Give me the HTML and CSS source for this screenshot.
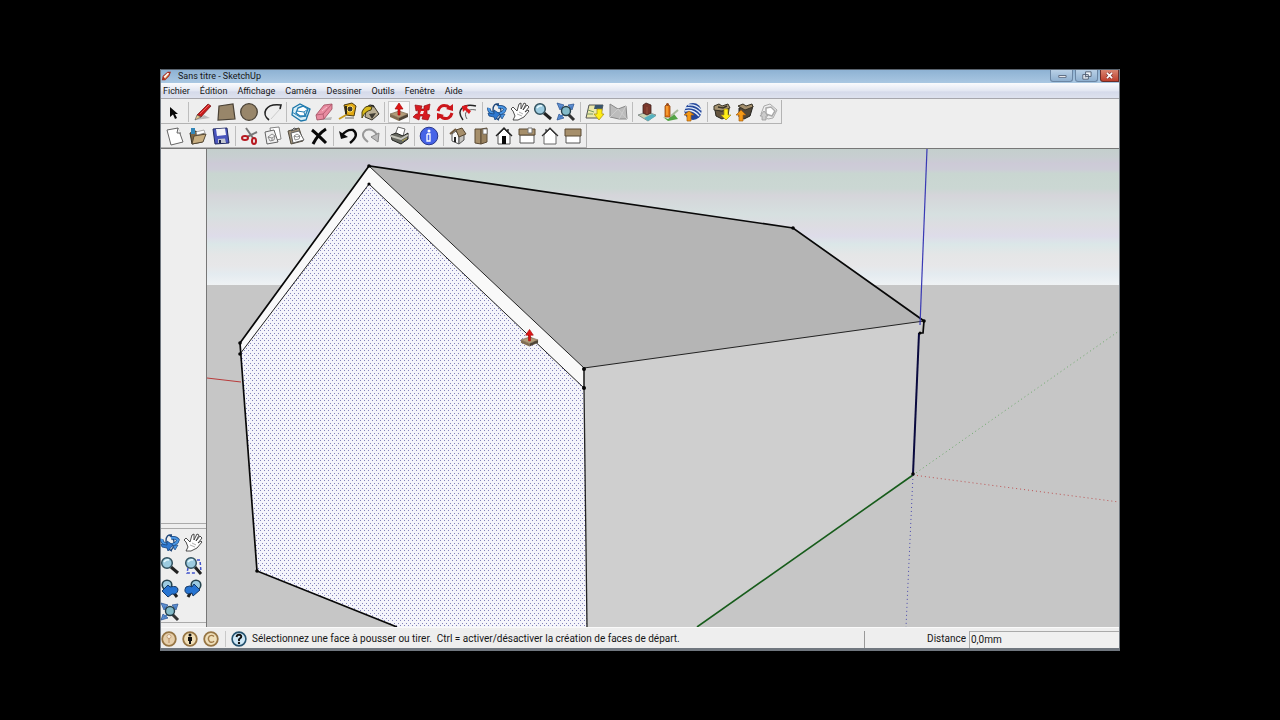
FILE: index.html
```html
<!DOCTYPE html>
<html lang="fr">
<head>
<meta charset="utf-8">
<title>Sans titre - SketchUp</title>
<link rel="stylesheet" href="styles.css">
</head>
<body>
<svg class="defs" width="0" height="0" aria-hidden="true">
  <symbol id="i-select" viewBox="0 0 20 20"><path d="M6 5V15L9 12.500L11 17L13 16L11 12H14Z" fill="#080808"/></symbol>
  <symbol id="i-pencil" viewBox="0 0 20 20"><path d="M3 18L17 16L11 13Z" fill="#bbb"/><path d="M4 13L15 2L18 4L8 15Z" fill="#c81c1c" stroke="#701010" stroke-width=".7"/><path d="M4 13L8 15L2 18Z" fill="#e8c890" stroke="#444" stroke-width=".6"/><path d="M7 12L16 3" stroke="#f06060"/></symbol>
  <symbol id="i-rect" viewBox="0 0 20 20"><path d="M3 4L17 2L19 17L2 18Z" fill="#98866a" stroke="#4a4236" stroke-width="1.200"/></symbol>
  <symbol id="i-circle" viewBox="0 0 20 20"><circle cx="10" cy="10" r="8.300" fill="#98866a" stroke="#4a4236" stroke-width="1.300"/></symbol>
  <symbol id="i-arc" viewBox="0 0 20 20"><path d="M7 18C-1 12 3 1 19 3L18 7" fill="none" stroke="#222" stroke-width="1.600"/><path d="M9 17L18 7" stroke="#ccc"/></symbol>
  <symbol id="i-component" viewBox="0 0 20 20"><path d="M2 6L9 2L19 7L15 18L10 19L1 13Z" fill="#d9eef6" stroke="#1b75a8" stroke-width="1.300"/><path d="M7 6L12 4L17 7L14 14L9 14L5 11Z" fill="#fff" stroke="#2680b4" stroke-width="1.400"/><path d="M6 9L13 10L17 7M13 10L14 14M1 10L9 15L16 14" fill="none" stroke="#2680b4"/></symbol>
  <symbol id="i-eraser" viewBox="0 0 20 20"><path d="M3 17L18 15L17 18H6Z" fill="#bbb"/><path d="M2 13L10 3L18 2V7L10 17L3 18Z" fill="#e88ba0" stroke="#9c4a5c" stroke-width=".8"/><path d="M2 13L9 12L18 2M9 12L10 17" fill="none" stroke="#ad566a" stroke-width=".8"/><path d="M8 9L13 5" stroke="#f9c0cc"/></symbol>
  <symbol id="i-tape" viewBox="0 0 20 20"><path d="M7 3L15 1L19 4L17 14L9 13Z" fill="#e2a914" stroke="#4b3b10"/><circle cx="13" cy="7" r="3" fill="#443c30" stroke="#fae06a"/><path d="M9 13L2 17" stroke="#c79a1c" stroke-width="2"/><path d="M8 16H17" stroke="#aaa" stroke-width="2"/><path d="M9 4V12" stroke="#332a18" stroke-width="2"/></symbol>
  <symbol id="i-paint" viewBox="0 0 20 20"><path d="M6 8L13 3L19 12L12 18L5 15Z" fill="#b9ae94" stroke="#38342a"/><path d="M6 8Q9 0 14 5" fill="none" stroke="#222" stroke-width="1.300"/><path d="M12 5Q5 2 2 10L2 16Q5 9 11 8Z" fill="#d8b81a" stroke="#4c4010"/><path d="M9 12L16 11L12 17Z" fill="#3f3b32"/></symbol>
  <symbol id="i-push" viewBox="0 0 20 20"><path d="M1 12L10 9L19 12L10 16Z" fill="#b19b78" stroke="#6b5b42" stroke-width=".6"/><path d="M1 12L10 16V19L1 15Z" fill="#806c50"/><path d="M10 16L19 12V15L10 19Z" fill="#4e4436"/><path d="M10 1L14 7H11V13H9V7H6Z" fill="#e01515" stroke="#a80b0b" stroke-width=".7"/></symbol>
  <symbol id="i-move" viewBox="0 0 20 20"><path d="M3 3L10 4L9 7L12 7L12 4L18 2L17 8L15 8L15 12L18 13L16 18L10 17L11 14H8L7 18L1 15L4 12L6 12L6 8L4 9Z" fill="#d81b20" stroke="#951015" stroke-width=".7"/><path d="M9 9H12L11 12H8Z" fill="#f2eaea"/></symbol>
  <symbol id="i-rotate" viewBox="0 0 20 20"><path d="M3 9Q5 2 12 4L15 6" fill="none" stroke="#cc171c" stroke-width="3"/><path d="M17 11Q15 18 8 16L5 14" fill="none" stroke="#cc171c" stroke-width="3"/><path d="M18 2V9L11 7ZM2 18V11L9 13Z" fill="#cc171c"/></symbol>
  <symbol id="i-offset" viewBox="0 0 20 20"><path d="M5 18C-2 9 4 1 18 4" fill="none" stroke="#252525" stroke-width="1.500"/><path d="M9 17C5 11 9 6 18 8" fill="none" stroke="#666"/><path d="M4 4L10 3L9 6L13 9L11 12L7 8L5 10Z" fill="#dc181d"/></symbol>
  <symbol id="i-orbit" viewBox="0 0 20 20"><path d="M12 2Q6 1 6 8Q6 16 12 18M9 2Q14 4 14 10Q14 15 11 17" fill="none" stroke="#20477a" stroke-width="1.400"/><path d="M2 6Q1 10 8 12Q17 12 18 7Q16 4 11 5" fill="none" stroke="#164682" stroke-width="3.400"/><path d="M2 6Q1 10 8 12Q17 12 18 7Q16 4 11 5" fill="none" stroke="#4b97e4" stroke-width="2"/><path d="M7 8L13 12L8 18L7 15L2 14L1 11L7 12Z" fill="#2f78d0" stroke="#164682" stroke-width=".8"/><path d="M13 13L18 12L15 17Z" fill="#4b97e4" stroke="#164682" stroke-width=".7"/></symbol>
  <symbol id="i-hand" viewBox="0 0 20 20"><path d="M3 18L5 14L3 9L1 7L3 5L7 9L9 2L11 1L11 7L14 1L16 2L13 8L17 3L19 5L15 10L18 8L19 9L14 15L8 18Z" fill="#fff" stroke="#3b3b3b" stroke-width=".9"/><path d="M7 12L12 14M9 10L13 12" stroke="#999" stroke-width=".8"/></symbol>
  <symbol id="i-zoom" viewBox="0 0 20 20"><path d="M11 11L18 17" stroke="#222" stroke-width="3"/><circle cx="7" cy="7" r="5.300" fill="#9ccbe0" stroke="#33525f" stroke-width="1.500"/><path d="M4 6Q6 3 9 4" fill="none" stroke="#e8faff" stroke-width="1.500"/></symbol>
  <symbol id="i-extents" viewBox="0 0 20 20"><path d="M1 1L8 3L4 8ZM18 2L12 3L16 8ZM1 18L3 12L8 16Z" fill="#5b8ed2" stroke="#264f8c" stroke-width=".7"/><path d="M4 5L7 7M16 5L13 7M4 15L7 13" stroke="#477bc0" stroke-width="2"/><path d="M12 12L18 18" stroke="#333" stroke-width="3"/><circle cx="10" cy="9" r="4.500" fill="#83bbc9" stroke="#263e48" stroke-width="1.400"/></symbol>
  <symbol id="i-zoomwin" viewBox="0 0 20 20"><path d="M14 4H17L18 16M5 12L4 17H12" fill="none" stroke="#4052cb" stroke-width="1.500" stroke-dasharray="3 2"/><path d="M12 11L18 18" stroke="#222" stroke-width="3"/><circle cx="8" cy="7" r="5.300" fill="#9ccbe0" stroke="#33525f" stroke-width="1.500"/><path d="M5 6Q7 3 10 4" fill="none" stroke="#e8faff" stroke-width="1.500"/></symbol>
  <symbol id="i-previous" viewBox="0 0 20 20"><path d="M11 10L17 18" stroke="#222" stroke-width="3"/><circle cx="7" cy="6" r="4.800" fill="#9ccbe0" stroke="#26444f" stroke-width="1.600"/><path d="M2 12L8 6L10 8Q18 6 18 11Q17 16 12 15L8 18Z" fill="#2674d2" stroke="#143968"/></symbol>
  <symbol id="i-next" viewBox="0 0 20 20"><path d="M9 11L5 18" stroke="#222" stroke-width="3"/><circle cx="13" cy="6" r="4.800" fill="#9ccbe0" stroke="#26444f" stroke-width="1.600"/><path d="M17 11L10 17L9 14L5 15Q0 13 3 8Q7 6 9 8L11 5Z" fill="#2674d2" stroke="#143968"/></symbol>
  <symbol id="i-getview" viewBox="0 0 20 20"><path d="M4 3H18L15 16H1Z" fill="#ece8aa" stroke="#555"/><path d="M10 3H18L17 7H9Z" fill="#38556e"/><path d="M3 8L9 10M2 12H8" stroke="#789a60"/><path d="M12 7H17V12H19L14 18L9 12H12Z" fill="#ffed15" stroke="#a58b12" stroke-width=".7"/></symbol>
  <symbol id="i-terrain" viewBox="0 0 20 20"><path d="M2 2L10 7L18 4L19 17L11 17L2 15Z" fill="#bcbcbc" stroke="#888"/><path d="M2 15L10 7L19 17M18 4L11 17" fill="none" stroke="#ccc"/></symbol>
  <symbol id="i-building" viewBox="0 0 20 20"><path d="M1 13L10 10L19 13L11 19Z" fill="#c9d1b0" stroke="#637071" stroke-width=".7"/><path d="M7 16L15 12L19 14L11 19Z" fill="#55b2c0"/><path d="M6 3L9 1L14 3V11L10 13L6 11Z" fill="#79372b" stroke="#3c211d" stroke-width=".8"/><path d="M10 5V12" stroke="#97523f"/></symbol>
  <symbol id="i-model" viewBox="0 0 20 20"><path d="M3 15L8 17L14 12L18 17L8 19Z" fill="#51a343"/><path d="M11 14L18 8" stroke="#a7b99b" stroke-width="2"/><path d="M5 4L7 2L10 4V15H5Z" fill="#e87814" stroke="#8d480f" stroke-width=".8"/><path d="M7 4V13" stroke="#ffbe4f"/><circle cx="7.500" cy="2.500" r="1.500" fill="#984c1e"/></symbol>
  <symbol id="i-earth" viewBox="0 0 20 20"><circle cx="10" cy="9.500" r="8.500" fill="#24479c"/><path d="M2 6Q12 4 18 12M5 3Q13 2 18 8M2 9Q10 7 16 14" fill="none" stroke="#e3edf9" stroke-width="1.400"/><path d="M6 9L11 13H8V19H4V13H1Z" fill="#f49a17" stroke="#a45c10" stroke-width=".7"/></symbol>
  <symbol id="i-get3d" viewBox="0 0 20 20"><path d="M3 8L10 9L17 7L16 14L10 17L4 14Z" fill="#66563f" stroke="#292720"/><path d="M2 4L7 2L10 4L16 2L18 6L10 9L2 8Z" fill="#a59270" stroke="#393427"/><path d="M6 5L11 6L15 4" fill="none" stroke="#393427" stroke-width="1.500"/><path d="M12 7H16V13H19L14 18L9 13H12Z" fill="#ffed15" stroke="#a58b12" stroke-width=".7"/></symbol>
  <symbol id="i-share3d" viewBox="0 0 20 20"><path d="M4 6L18 4L15 14L9 17L4 15Z" fill="#51483a" stroke="#24231f"/><path d="M3 4L8 2L11 4L17 2L18 5L10 8Z" fill="#a28d6b" stroke="#393427"/><path d="M6 8L11 13H8V19H4V13H1Z" fill="#f49a17" stroke="#a45c10" stroke-width=".7"/></symbol>
  <symbol id="i-sharecomp" viewBox="0 0 20 20"><path d="M6 4L12 2L19 8L15 16L10 17L3 12Z" fill="#eee" stroke="#aaa"/><path d="M8 6L13 5L17 9L14 14L8 12Z" fill="#fff" stroke="#aaa" stroke-width="1.500"/><path d="M6 9L10 14H8V18H4V14H2Z" fill="#ccc" stroke="#999" stroke-width=".8"/></symbol>
  <symbol id="i-new" viewBox="0 0 20 20"><path d="M2 4L13 2L18 16L6 19Z" fill="#fff" stroke="#666"/><path d="M13 2L12 7L16 7" fill="#eee" stroke="#666"/></symbol>
  <symbol id="i-open" viewBox="0 0 20 20"><path d="M2 7L8 5L9 7H16L14 16L4 18Z" fill="#7d6746" stroke="#383022"/><path d="M6 10L18 8L15 16L4 18Z" fill="#c8ae80" stroke="#544733"/><path d="M3 2H7V8H3Z" fill="#3286b8"/><path d="M8 6L16 4L17 7L9 9Z" fill="#fff" stroke="#777" stroke-width=".6"/></symbol>
  <symbol id="i-save" viewBox="0 0 20 20"><path d="M2 3L16 2L18 17L4 18Z" fill="#4a55bd" stroke="#20295f"/><path d="M5 3L14 2.500L15 9L6 10Z" fill="#f3f3f8"/><path d="M7 13L14 12.500L15 17H7Z" fill="#c2c6ce"/><path d="M8 14H10V17H8Z" fill="#1d254f"/></symbol>
  <symbol id="i-cut" viewBox="0 0 20 20"><path d="M6 2L13 12M17 6L7 11" stroke="#777" stroke-width="2"/><ellipse cx="5" cy="12" rx="3" ry="2" fill="none" stroke="#b71920" stroke-width="2"/><ellipse cx="14" cy="15" rx="2" ry="3" fill="none" stroke="#b71920" stroke-width="2"/></symbol>
  <symbol id="i-copy" viewBox="0 0 20 20"><path d="M7 2L16 1L18 13L9 15Z" fill="#fff" stroke="#777" stroke-width=".9"/><path d="M2 6L11 4L15 16L4 18Z" fill="#f1f1f1" stroke="#555" stroke-width=".9"/><path d="M5 11L9 8L12 10L11 14L7 15ZM5 11L9 12L12 10M9 12V15" fill="none" stroke="#777" stroke-width=".8"/></symbol>
  <symbol id="i-paste" viewBox="0 0 20 20"><path d="M2 5L13 2L17 15L5 18Z" fill="#a0917a" stroke="#514a3d"/><path d="M5 5L8 2L11 3Z" fill="#ccc" stroke="#555"/><path d="M5 7L13 5L18 14L7 17Z" fill="#fff" stroke="#555" stroke-width=".9"/><path d="M8 10L11 8L14 10L13 13L9 14ZM8 10L11 11L14 10" fill="none" stroke="#777" stroke-width=".8"/></symbol>
  <symbol id="i-delete" viewBox="0 0 20 20"><path d="M3 4Q8 8 17 17M17 3Q9 8 4 18" fill="none" stroke="#080808" stroke-width="3"/></symbol>
  <symbol id="i-undo" viewBox="0 0 20 20"><path d="M4 9Q9 3 15 4Q22 9 12 17" fill="none" stroke="#090909" stroke-width="2.400"/><path d="M1 5L3 13L10 11Z" fill="#090909"/></symbol>
  <symbol id="i-redo" viewBox="0 0 20 20"><path d="M16 9Q12 2 5 4Q-2 9 7 16" fill="none" stroke="#999" stroke-width="2"/><path d="M10 11L18 7L17 16Z" fill="#bbb" stroke="#888"/></symbol>
  <symbol id="i-print" viewBox="0 0 20 20"><path d="M5 9L8 1L15 3L13 10Z" fill="#fff" stroke="#666"/><path d="M1 9L6 7L13 10L18 7V13L11 18L2 14Z" fill="#666860" stroke="#262724"/><path d="M1 10L11 13L18 9" fill="none" stroke="#c5c5bb" stroke-width="2"/><path d="M12 15L17 12" stroke="#b1a654"/></symbol>
  <symbol id="i-info" viewBox="0 0 20 20"><circle cx="10" cy="10" r="8.800" fill="#4663e7" stroke="#28368a"/><circle cx="10" cy="5" r="1.500" fill="#fff"/><path d="M8 8H11V15H8V8" fill="none" stroke="#fff" stroke-width="1.300"/></symbol>
  <symbol id="i-iso" viewBox="0 0 20 20"><path d="M4 8L8 5L11 10V18L4 15Z" fill="#f9f9f9" stroke="#555"/><path d="M11 10L16 8V14L11 18Z" fill="#c5c4c0" stroke="#555"/><path d="M8 4L14 2L18 8L11 11Z" fill="#a68f6b" stroke="#55452f"/><path d="M8 3L2 8" stroke="#6d573d" stroke-width="2"/><path d="M6 11H8V16H6Z" fill="#222"/></symbol>
  <symbol id="i-top" viewBox="0 0 20 20"><path d="M4 3H10V18L4 17Z" fill="#a68f6b" stroke="#5b4a34"/><path d="M10 3L16 2V16L10 18Z" fill="#98815e" stroke="#5b4a34"/><path d="M12 3H16V8H12Z" fill="#fff" stroke="#666" stroke-width=".7"/></symbol>
  <symbol id="i-front" viewBox="0 0 20 20"><path d="M4 9L10 3L16 9V18H4Z" fill="#fff" stroke="#555"/><path d="M2 10L10 2L18 10M14 3V6" fill="none" stroke="#222" stroke-width="1.400"/><path d="M8 10H12V18H8Z" fill="#080808"/></symbol>
  <symbol id="i-side" viewBox="0 0 20 20"><path d="M3 9H17V17H3Z" fill="#fff" stroke="#555"/><path d="M2 3H18V9H2Z" fill="#a68f6b" stroke="#5b4a34"/><path d="M11 2H15V7H11Z" fill="#fff" stroke="#777"/></symbol>
  <symbol id="i-back" viewBox="0 0 20 20"><path d="M4 9L10 3L16 9V18H4Z" fill="#fff" stroke="#666"/><path d="M2 10L10 2L18 10M6 3V6" fill="none" stroke="#333" stroke-width="1.200"/></symbol>
  <symbol id="i-left" viewBox="0 0 20 20"><path d="M3 9H17V17H3Z" fill="#fff" stroke="#555"/><path d="M2 3H18V10H2Z" fill="#a68f6b" stroke="#5b4a34"/></symbol>
  <symbol id="i-geo" viewBox="0 0 16 16"><circle cx="8" cy="8" r="6.800" fill="#e6cfab" stroke="#967544" stroke-width="1.800"/><circle cx="8" cy="5.500" r="2" fill="#f8eddd" stroke="#b88f65" stroke-width=".7"/><path d="M8 7V12" stroke="#b98e64"/></symbol>
  <symbol id="i-person" viewBox="0 0 16 16"><circle cx="8" cy="8" r="6.800" fill="#f0dfb8" stroke="#967544" stroke-width="1.800"/><circle cx="8" cy="4" r="1.500" fill="#111"/><path d="M6 6H10V10H9V13H7V10H6Z" fill="#111"/></symbol>
  <symbol id="i-credit" viewBox="0 0 16 16"><circle cx="8" cy="8" r="6.800" fill="#efdfba" stroke="#967544" stroke-width="1.800"/><path d="M11 5.500Q9 3.500 6.500 5Q4 8 7 11Q10 12 11 10" fill="none" stroke="#a27d4a" stroke-width="1.400"/></symbol>
  <symbol id="i-help" viewBox="0 0 16 16"><circle cx="8" cy="8" r="6.900" fill="#cfe8f7" stroke="#24526f" stroke-width="1.600"/><path d="M5.500 6Q6 3.500 8.300 3.800Q11 4.200 10 6.500L8 8.300V10" fill="none" stroke="#111" stroke-width="1.900"/><circle cx="8" cy="12" r="1.200" fill="#111"/></symbol>
</svg>

<main class="window">
  <header class="titlebar">
    <svg class="logo" viewBox="0 0 12 12" aria-hidden="true"><path d="M1 11L2 6L8 1L12 1L10 6L5 11Z" fill="#a52a1e"/><path d="M3 7L8 2L10 3L5 9Z" fill="#fff4e8"/><path d="M4 10L9 5" stroke="#e28432"/></svg>
    <h1 class="title">Sans titre - SketchUp</h1>
    <div class="controls">
      <button class="control" aria-label="Réduire"><svg viewBox="0 0 20 12"><path d="M7 6H15V8H7Z" fill="#fff" stroke="#58667c"/></svg></button>
      <button class="control" aria-label="Restaurer"><svg viewBox="0 0 20 12"><path d="M9 2H15V7H9ZM6 5H12V10H6Z" fill="#eef4fa" stroke="#4d5b70"/><path d="M8 7H10V8H8Z" fill="#4d5b70"/></svg></button>
      <button class="control close" aria-label="Fermer"><svg viewBox="0 0 20 12"><path d="M7 3L13 9M13 3L7 9" stroke="#733" stroke-width="3.500"/><path d="M7 3L13 9M13 3L7 9" stroke="#fff" stroke-width="2"/></svg></button>
    </div>
  </header>
  <nav class="menubar">
    <button>Fichier</button><button>Édition</button><button>Affichage</button><button>Caméra</button><button>Dessiner</button><button>Outils</button><button>Fenêtre</button><button>Aide</button>
  </nav>
  <section class="toolbars">
    <div class="toolbar">
      <div class="group"><button aria-label="Sélectionner"><svg><use href="#i-select"/></svg></button></div>
      <div class="group"><button aria-label="Ligne"><svg><use href="#i-pencil"/></svg></button><button aria-label="Rectangle"><svg><use href="#i-rect"/></svg></button><button aria-label="Cercle"><svg><use href="#i-circle"/></svg></button><button aria-label="Arc"><svg><use href="#i-arc"/></svg></button></div>
      <div class="group"><button aria-label="Créer un composant"><svg><use href="#i-component"/></svg></button><button aria-label="Effacer"><svg><use href="#i-eraser"/></svg></button><button aria-label="Mètre"><svg><use href="#i-tape"/></svg></button><button aria-label="Colorier"><svg><use href="#i-paint"/></svg></button></div>
      <div class="group"><button class="active" aria-label="Pousser/Tirer"><svg><use href="#i-push"/></svg></button><button aria-label="Déplacer"><svg><use href="#i-move"/></svg></button><button aria-label="Faire pivoter"><svg><use href="#i-rotate"/></svg></button><button aria-label="Décalage"><svg><use href="#i-offset"/></svg></button></div>
      <div class="group"><button aria-label="Orbite"><svg><use href="#i-orbit"/></svg></button><button aria-label="Panoramique"><svg><use href="#i-hand"/></svg></button><button aria-label="Zoom"><svg><use href="#i-zoom"/></svg></button><button aria-label="Zoom étendu"><svg><use href="#i-extents"/></svg></button></div>
      <div class="group"><button aria-label="Obtenir la vue"><svg><use href="#i-getview"/></svg></button><button aria-label="Terrain"><svg><use href="#i-terrain"/></svg></button></div>
      <div class="group"><button aria-label="Bâtiment"><svg><use href="#i-building"/></svg></button><button aria-label="Modèle"><svg><use href="#i-model"/></svg></button><button aria-label="Google Earth"><svg><use href="#i-earth"/></svg></button></div>
      <div class="group"><button aria-label="Obtenir des modèles"><svg><use href="#i-get3d"/></svg></button><button aria-label="Partager le modèle"><svg><use href="#i-share3d"/></svg></button><button aria-label="Partager le composant"><svg><use href="#i-sharecomp"/></svg></button></div>
    </div>
    <div class="toolbar">
      <div class="group"><button aria-label="Nouveau"><svg><use href="#i-new"/></svg></button><button aria-label="Ouvrir"><svg><use href="#i-open"/></svg></button><button aria-label="Enregistrer"><svg><use href="#i-save"/></svg></button></div>
      <div class="group"><button aria-label="Couper"><svg><use href="#i-cut"/></svg></button><button aria-label="Copier"><svg><use href="#i-copy"/></svg></button><button aria-label="Coller"><svg><use href="#i-paste"/></svg></button><button aria-label="Supprimer"><svg><use href="#i-delete"/></svg></button></div>
      <div class="group"><button aria-label="Annuler"><svg><use href="#i-undo"/></svg></button><button aria-label="Rétablir"><svg><use href="#i-redo"/></svg></button></div>
      <div class="group"><button aria-label="Imprimer"><svg><use href="#i-print"/></svg></button></div>
      <div class="group"><button aria-label="Infos du modèle"><svg><use href="#i-info"/></svg></button></div>
      <div class="group"><button aria-label="Iso"><svg><use href="#i-iso"/></svg></button><button aria-label="Dessus"><svg><use href="#i-top"/></svg></button><button aria-label="Avant"><svg><use href="#i-front"/></svg></button><button aria-label="Droite"><svg><use href="#i-side"/></svg></button><button aria-label="Arrière"><svg><use href="#i-back"/></svg></button><button aria-label="Gauche"><svg><use href="#i-left"/></svg></button></div>
    </div>
  </section>
  <div class="workspace">
    <aside class="palette">
      <div class="palette-tools">
        <button aria-label="Orbite"><svg><use href="#i-orbit"/></svg></button><button aria-label="Panoramique"><svg><use href="#i-hand"/></svg></button>
        <button aria-label="Zoom"><svg><use href="#i-zoom"/></svg></button><button aria-label="Fenêtre de zoom"><svg><use href="#i-zoomwin"/></svg></button>
        <button aria-label="Précédent"><svg><use href="#i-previous"/></svg></button><button aria-label="Suivant"><svg><use href="#i-next"/></svg></button>
        <button aria-label="Zoom étendu"><svg><use href="#i-extents"/></svg></button>
      </div>
    </aside>
    <div class="viewport">
      <svg class="scene" viewBox="207 149 912 478" preserveAspectRatio="xMidYMid slice" role="img" aria-label="Maison en perspective">
        <defs>
          <linearGradient id="sky" gradientUnits="userSpaceOnUse" x1="0" y1="149" x2="0" y2="285">
            <stop offset="0" stop-color="#c4cfcd"/><stop offset=".06" stop-color="#c8ced1"/><stop offset=".11" stop-color="#cdcad7"/><stop offset=".15" stop-color="#cdcdd7"/><stop offset=".18" stop-color="#c9d6d1"/><stop offset=".29" stop-color="#cbd7d3"/><stop offset=".34" stop-color="#d5d5da"/><stop offset=".4" stop-color="#d5dadc"/><stop offset=".48" stop-color="#d6e0e0"/><stop offset=".56" stop-color="#dddde2"/><stop offset=".64" stop-color="#dedce9"/><stop offset=".7" stop-color="#dbe7e8"/><stop offset=".78" stop-color="#e5e6e7"/><stop offset=".86" stop-color="#e7e7e9"/><stop offset=".92" stop-color="#e4ebf0"/><stop offset="1" stop-color="#eff2f4"/>
          </linearGradient>
          <pattern id="dots" width="4" height="5" patternUnits="userSpaceOnUse"><rect width="4" height="5" fill="#f5f5fb"/><path d="M0 0H1V1H0ZM2 3H3V4H2Z" fill="#8383bb"/></pattern>
        </defs>
        <path d="M207 149H1119V285H207Z" fill="url(#sky)"/>
        <path d="M207 285H1119V627H207Z" fill="#c6c6c6"/>
        <path d="M207 378L241 382" stroke="#b83b3b"/>
        <path d="M584 368L924 321L919 334L913 474L697 627H587Z" fill="#cfcfcf"/>
        <path d="M369 166L793 228L924 321L584 368Z" fill="#b5b5b5"/>
        <path d="M369 166L584 368V388L369 184L240 354V343Z" fill="#f9f9f9"/>
        <path d="M369 184L584 388L587 627H397L257 571L240 354Z" fill="url(#dots)"/>
        <g fill="none" stroke="#222" stroke-width="1">
          <path d="M240 354L369 184L584 388"/><path d="M369 166L584 368L924 321"/>
          <path d="M584 388L587 628" stroke-width="1.300"/><path d="M584 368V388" stroke-width="1.600"/>
        </g>
        <g fill="none" stroke="#080808" stroke-width="1.700">
          <path d="M397 627L257 571L240 343L369 166L793 228L924 321L923 333H919"/>
          <path d="M919 333L913 474" stroke="#09093e" stroke-width="2"/>
        </g>
        <path d="M927 149L920 325" stroke="#3939b4" stroke-width="1.200"/>
        <path d="M913 475L697 627" stroke="#175c1b" stroke-width="1.600"/>
        <path d="M913 475L1119 331" stroke="#6aa868" stroke-dasharray="1 3"/>
        <path d="M913 475L1119 502" stroke="#bd5252" stroke-dasharray="1 3"/>
        <path d="M913 475L906 627" stroke="#4949ae" stroke-dasharray="1 3"/>
        <g fill="#050505"><circle cx="369" cy="166" r="1.800"/><circle cx="369" cy="184" r="1.600"/><circle cx="240" cy="343" r="1.800"/><circle cx="240" cy="354" r="1.800"/><circle cx="257" cy="571" r="1.800"/><circle cx="584" cy="369" r="2"/><circle cx="584" cy="388" r="2"/><circle cx="793" cy="228" r="1.800"/><circle cx="924" cy="321" r="1.800"/><circle cx="920" cy="333" r="1.500"/><circle cx="913" cy="474" r="1.800"/></g>
        <use href="#i-push" x="520" y="328" width="19" height="20"/>
      </svg>
    </div>
  </div>
  <footer class="statusbar">
    <div class="badges">
      <button aria-label="Géolocalisation"><svg><use href="#i-geo"/></svg></button><button aria-label="Auteur"><svg><use href="#i-person"/></svg></button><button aria-label="Crédits"><svg><use href="#i-credit"/></svg></button>
    </div>
    <button class="help" aria-label="Aide"><svg><use href="#i-help"/></svg></button>
    <p class="hint">Sélectionnez une face à pousser ou tirer.&nbsp; Ctrl = activer/désactiver la création de faces de départ.</p>
    <div class="measure"><label for="distance">Distance</label><input id="distance" type="text" value="0,0mm"></div>
  </footer>
</main>
</body>
</html>
```
FILE: styles.css
```css
* { box-sizing: border-box; }
body {
  margin: 0;
  height: 100vh;
  padding: 69px 12.5vw;
  display: flex;
  background: #000;
  color: #161616;
  font: 9px/12px Roboto, "Noto Sans", sans-serif;
}
button { margin: 0; padding: 0; border: 0; background: none; font: inherit; color: inherit; }
button svg { display: block; width: 100%; height: 100%; }
.defs { position: absolute; }
.window {
  flex: 1;
  min-width: 0;
  display: flex;
  flex-direction: column;
  background: #eee;
  border: solid #70777f;
  border-width: 0 1px 3px;
}
.titlebar {
  display: flex;
  align-items: flex-start;
  height: 14px;
  border-top: 1px solid #59636e;
  background: linear-gradient(#8eb2d3, #a9c7e2);
}
.logo { width: 10px; height: 12px; }
.title { flex: 1; margin: 0 0 0 7px; font-size: 9px; font-weight: 400; line-height: 12px; }
.controls { display: flex; align-self: stretch; gap: 2px; }
.control {
  width: 23px;
  height: 12px;
  border: 1px solid #6b86a4;
  border-top: 0;
  border-radius: 0 0 3px 3px;
  background: linear-gradient(#b9d0e6, #8fb0d0);
}
.close { width: 19px; border-color: #6a2c27; background: linear-gradient(#d98672, #be3e2b); border-bottom-right-radius: 0; }
.menubar {
  display: flex;
  gap: 10px;
  height: 16px;
  padding: 0 2px;
  border-bottom: 1px solid #a6a6ac;
  background: linear-gradient(#fafbfd, #e3e7f2 50%, #d5daea 60%, #dde1ee);
}
.toolbars { padding-top: 1px; border-bottom: 1px solid #777; }
.toolbar {
  display: flex;
  width: max-content;
  height: 24px;
  border: solid #b3b3b3;
  border-width: 0 1px 1px 0;
  padding: 2px 3px 1px 0;
}
.toolbar + .toolbar { padding-left: 1px; }
.group { display: flex; gap: 3px; padding-left: 4px; margin-right: 4px; border-left: 1px solid #bdbdbd; }
.group:first-child { border-left: 0; padding-left: 3px; }
.group:last-child { margin-right: 0; }
.group button { width: 20px; height: 20px; }
.active { background: #f8f8f8; outline: 1px solid #c9c9c9; }
.workspace { flex: 1; min-height: 0; display: flex; }
.palette { width: 45px; flex: none; display: flex; flex-direction: column; justify-content: flex-end; padding-bottom: 4px; }
.palette::before { content: ""; height: 4px; border-top: 1px solid #aaa; }
.palette-tools {
  display: grid;
  grid-template-columns: 20px 20px;
  gap: 3px;
  padding-top: 4px;
  border-top: 1px solid #aaa;
  border-bottom: 1px solid #aaa;
}
.palette-tools button { width: 20px; height: 20px; margin-left: -1px; }
.viewport { flex: 1; min-width: 0; border-left: 1px solid #777; background: #c6c6c6; }
.scene { display: block; width: 100%; height: 100%; }
.statusbar { display: flex; align-items: center; height: 21px; padding-top: 2px; border-top: 1px solid #fafafa; background: #eee; font-size: 10px; }
.badges { display: flex; gap: 5px; padding-right: 6px; border-right: 1px solid #c8c8c8; }
.badges button, .help { width: 16px; height: 16px; }
.help { margin-left: 5px; }
.hint { flex: 1; margin: 0 0 0 5px; white-space: nowrap; overflow: hidden; }
.measure { display: flex; align-items: center; justify-content: flex-end; width: 255px; height: 17px; border-left: 1px solid #999; }
.measure label { margin-right: 3px; }
.measure input {
  width: 150px;
  height: 17px;
  padding: 0 1px;
  border: solid #aaa;
  border-width: 1px 0 0 1px;
  background: #f0f0f0;
  color: inherit;
  font: inherit;
}
```
